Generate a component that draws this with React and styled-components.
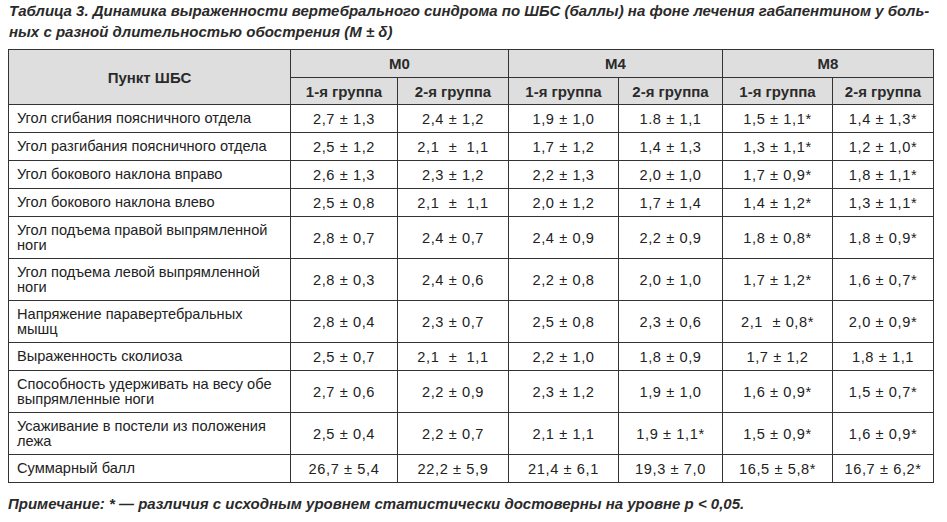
import React from 'react';
import styled, { createGlobalStyle } from 'styled-components';

const GlobalStyle = createGlobalStyle`
  body {
    margin: 0;
    background: #ffffff;
    font-family: "Liberation Sans", Arial, sans-serif;
    color: #222;
  }
`;

const Page = styled.div`
  width: 947px;
  padding: 0 14px 0 8px;
  box-sizing: border-box;
`;

const Caption = styled.div`
  font-weight: bold;
  font-style: italic;
  font-size: 15px;
  line-height: 21px;
  color: #2a2a2a;
  padding-left: 1px;
  margin-bottom: 7px;
`;

const Table = styled.table`
  border-collapse: collapse;
  width: 925px;
  table-layout: fixed;
  font-size: 14.6px;
  border: 1.5px solid #333;
`;

const HeadCell = styled.th`
  background: #dedede;
  border: 1px solid #333;
  font-weight: bold;
  font-size: 15px;
  line-height: 17px;
  color: #2a2a2a;
  height: ${(p) => p.h || 26}px;
  padding: 0;
  text-align: center;
  vertical-align: middle;
`;

const NameCell = styled.td`
  border: 1px solid #333;
  padding: 0 8px;
  height: ${(p) => (p.tall ? 41 : 27)}px;
  line-height: 15px;
  text-align: left;
  vertical-align: middle;
`;

const ValueCell = styled.td`
  border: 1px solid #333;
  padding: 0;
  text-align: center;
  vertical-align: middle;
  white-space: pre;
  letter-spacing: 0.6px;
`;

const Note = styled.div`
  font-weight: bold;
  font-style: italic;
  font-size: 15px;
  margin-top: 12px;
  color: #2a2a2a;
`;

const rows = [
  ['Угол сгибания поясничного отдела', false, ['2,7 ± 1,3', '2,4 ± 1,2', '1,9 ± 1,0', '1.8 ± 1,1', '1,5 ± 1,1*', '1,4 ± 1,3*']],
  ['Угол разгибания поясничного отдела', false, ['2,5 ± 1,2', '2,1  ±  1,1', '1,7 ± 1,2', '1,4 ± 1,3', '1,3 ± 1,1*', '1,2 ± 1,0*']],
  ['Угол бокового наклона вправо', false, ['2,6 ± 1,3', '2,3 ± 1,2', '2,2 ± 1,3', '2,0 ± 1,0', '1,7 ± 0,9*', '1,8 ± 1,1*']],
  ['Угол бокового наклона влево', false, ['2,5 ± 0,8', '2,1  ±  1,1', '2,0 ± 1,2', '1,7 ± 1,4', '1,4 ± 1,2*', '1,3 ± 1,1*']],
  ['Угол подъема правой выпрямленной ноги', true, ['2,8 ± 0,7', '2,4 ± 0,7', '2,4 ± 0,9', '2,2 ± 0,9', '1,8 ± 0,8*', '1,8 ± 0,9*']],
  ['Угол подъема левой выпрямленной ноги', true, ['2,8 ± 0,3', '2,4 ± 0,6', '2,2 ± 0,8', '2,0 ± 1,0', '1,7 ± 1,2*', '1,6 ± 0,7*']],
  ['Напряжение паравертебральных мышц', true, ['2,8 ± 0,4', '2,3 ± 0,7', '2,5 ± 0,8', '2,3 ± 0,6', '2,1  ± 0,8*', '2,0 ± 0,9*']],
  ['Выраженность сколиоза', false, ['2,5 ± 0,7', '2,1  ±  1,1', '2,2 ± 1,0', '1,8 ± 0,9', '1,7 ± 1,2', '1,8 ± 1,1']],
  ['Способность удерживать на весу обе выпрямленные ноги', true, ['2,7 ± 0,6', '2,2 ± 0,9', '2,3 ± 1,2', '1,9 ± 1,0', '1,6 ± 0,9*', '1,5 ± 0,7*']],
  ['Усаживание в постели из положения лежа', true, ['2,5 ± 0,4', '2,2 ± 0,7', '2,1 ± 1,1', '1,9 ± 1,1*', '1,5 ± 0,9*', '1,6 ± 0,9*']],
  ['Суммарный балл', false, ['26,7 ± 5,4', '22,2 ± 5,9', '21,4 ± 6,1', '19,3 ± 7,0', '16,5 ± 5,8*', '16,7 ± 6,2*']],
];

const colWidths = [282, 107, 111, 110, 104, 110, 101];

export default function App() {
  return (
    <Page>
      <GlobalStyle />
      <Caption>
        Таблица 3. Динамика выраженности вертебрального синдрома по ШБС (баллы) на фоне лечения габапентином у боль-
        <br />
        ных с разной длительностью обострения (M ± δ)
      </Caption>
      <Table>
        <colgroup>
          {colWidths.map((w, i) => (
            <col key={i} style={{ width: w }} />
          ))}
        </colgroup>
        <thead>
          <tr>
            <HeadCell rowSpan={2}>Пункт ШБС</HeadCell>
            <HeadCell colSpan={2} h={27}>M0</HeadCell>
            <HeadCell colSpan={2} h={27}>M4</HeadCell>
            <HeadCell colSpan={2} h={27}>M8</HeadCell>
          </tr>
          <tr>
            {['M0', 'M4', 'M8'].map((m) => (
              <React.Fragment key={m}>
                <HeadCell>1-я группа</HeadCell>
                <HeadCell>2-я группа</HeadCell>
              </React.Fragment>
            ))}
          </tr>
        </thead>
        <tbody>
          {rows.map(([name, tall, values]) => (
            <tr key={name}>
              <NameCell tall={tall}>{name}</NameCell>
              {values.map((v, i) => (
                <ValueCell key={i}>{v}</ValueCell>
              ))}
            </tr>
          ))}
        </tbody>
      </Table>
      <Note>Примечание: * — различия с исходным уровнем статистически достоверны на уровне p &lt; 0,05.</Note>
    </Page>
  );
}
